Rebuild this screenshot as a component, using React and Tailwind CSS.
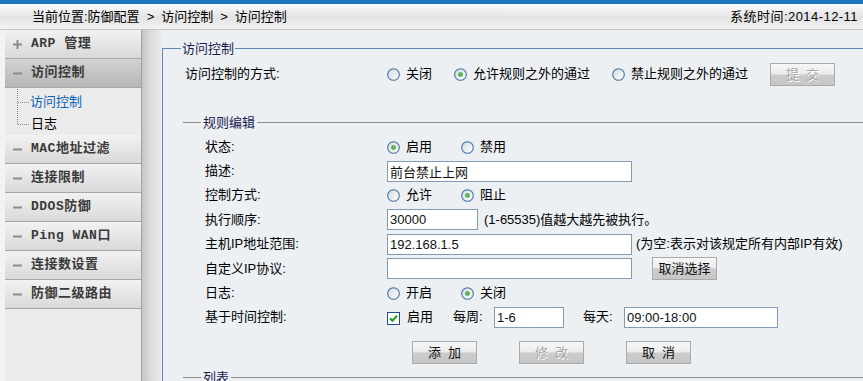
import React from 'react'

const MENU = [
  { id: 'arp', label: 'ARP 管理', icon: 'plus' },
  { id: 'acl', label: '访问控制', active: true, sub: ['访问控制', '日志'] },
  { id: 'mac', label: 'MAC地址过滤' },
  { id: 'conn', label: '连接限制' },
  { id: 'ddos', label: 'DDOS防御' },
  { id: 'ping', label: 'Ping WAN口' },
  { id: 'cnum', label: '连接数设置' },
  { id: 'route', label: '防御二级路由' },
]

function Radio({ checked }) {
  return (
    <svg width="13" height="13" viewBox="0 0 13 13" className="shrink-0">
      <defs>
        <linearGradient id="rfill" x1="0" y1="0" x2="1" y2="1">
          <stop offset="0" stopColor="#d3d8de" />
          <stop offset="1" stopColor="#ffffff" />
        </linearGradient>
      </defs>
      <circle cx="6.5" cy="6.5" r="5.8" fill="url(#rfill)" stroke="#45739f" strokeWidth="1.1" />
      {checked && <circle cx="6.5" cy="6.5" r="2.3" fill="#2ea32e" />}
      {checked && <circle cx="6.5" cy="6.5" r="1" fill="#8be08b" />}
    </svg>
  )
}

function Opt({ w, checked, children }) {
  return (
    <div className={`flex items-center gap-[6px] ${w}`}>
      <Radio checked={checked} />
      <span>{children}</span>
    </div>
  )
}

function Btn({ children, disabled }) {
  return (
    <button
      className={`h-[23px] w-[65px] shrink-0 border border-[#aaaaaa] bg-[linear-gradient(to_bottom,#f7f7f7_0%,#ebebeb_47%,#cbcbcb_53%,#c7c7c7_100%)] text-[13px] leading-none ${disabled ? 'text-[#a6a6a6] [text-shadow:1px_1px_0_#ffffff]' : 'text-[#111]'}`}
    >
      {children}
    </button>
  )
}

function Field({ w, value }) {
  return (
    <input
      readOnly
      value={value}
      className={`h-[21px] ${w} border border-[#7f9db9] bg-white pl-[2px] text-[13px] text-[#111] outline-none`}
    />
  )
}

function Row({ h, label, children }) {
  return (
    <div className={`flex items-center pl-[24px] ${h}`}>
      <span className="w-[182px] shrink-0">{label}</span>
      {children}
    </div>
  )
}

function Divider({ title, className }) {
  return (
    <div className={`ml-[2px] flex h-[17px] items-center ${className}`}>
      <div className="h-px w-[18px] bg-[#8a8a8a]" />
      <span className="px-[2px] leading-[17px] text-[#1a1a50]">{title}</span>
      <div className="h-px flex-1 bg-[#8a8a8a]" />
    </div>
  )
}

function MenuIcon({ type }) {
  if (type === 'plus') {
    return (
      <svg width="9" height="9" viewBox="0 0 9 9" className="shrink-0">
        <rect x="0" y="3.5" width="9" height="2" fill="#8c8c8c" />
        <rect x="3.5" y="0" width="2" height="9" fill="#8c8c8c" />
      </svg>
    )
  }
  return (
    <svg width="9" height="9" viewBox="0 0 9 9" className="shrink-0">
      <rect x="0" y="3.5" width="9" height="2" fill="#8c8c8c" />
    </svg>
  )
}

function Sidebar() {
  return (
    <aside className="flex w-[142px] shrink-0 bg-[#f3f3f3] pl-[5px]">
      <div className="w-[137px] border-r border-[#a3a3a3] bg-[#ebebeb] font-['Liberation_Mono','Noto_Sans_CJK_SC',monospace]">
        {MENU.map(m => (
          <div key={m.id}>
            <div
              className={`flex h-[29px] items-center border-b border-[#a6a6a6] pl-[8px] ${m.active ? 'bg-[linear-gradient(to_bottom,#d3d3d3,#b6b6b6)]' : 'bg-[linear-gradient(to_bottom,#f2f2f2,#d9d9d9)]'}`}
            >
              <MenuIcon type={m.icon} />
              <span className="ml-[9px] whitespace-pre text-[13px] font-bold tracking-[0.5px] text-[#3a3a3a]">{m.label}</span>
            </div>
            {m.sub && (
              <div className="flex h-[47px] bg-[#ebebeb] pl-[11px]">
                <svg width="14" height="47" viewBox="0 0 14 47" className="shrink-0">
                  <g stroke="#8a8a8a" strokeWidth="1" strokeDasharray="1 1" fill="none">
                    <line x1="1.5" y1="1" x2="1.5" y2="36" />
                    <line x1="2" y1="14.5" x2="14" y2="14.5" />
                    <line x1="2" y1="36.5" x2="14" y2="36.5" />
                  </g>
                </svg>
                <div className="flex flex-col pt-[3px] font-['Liberation_Sans','Noto_Sans_CJK_SC',sans-serif] text-[13px]">
                  <span className="flex h-[22px] items-center text-[#0b63b3]">{m.sub[0]}</span>
                  <span className="flex h-[22px] items-center pl-px text-black">{m.sub[1]}</span>
                </div>
              </div>
            )}
          </div>
        ))}
      </div>
    </aside>
  )
}

export default function App() {
  return (
    <div className="h-[381px] w-[863px] overflow-hidden bg-[#ecf0f3] font-['Liberation_Sans','Noto_Sans_CJK_SC',sans-serif] text-[13px] text-black">
      <div className="h-[4px] bg-[#1b76bc]" />
      <div className="flex h-[26px] items-center justify-between border-b border-[#c3c3c3] bg-[linear-gradient(to_bottom,#fbfbfb,#e3e3e3_55%,#f3f3f3)] pl-[32px] pr-[5px]">
        <span>
          当前位置:防御配置<span className="mx-[7px]">&gt;</span>访问控制<span className="mx-[7px]">&gt;</span>访问控制
        </span>
        <span className="tracking-[0.45px]">系统时间:2014-12-11</span>
      </div>

      <div className="flex h-[351px]">
        <Sidebar />
        <div className="w-[19px] shrink-0 bg-[linear-gradient(to_right,#c4c4c4,#d9d9d9_40%,#e9e9e9)]" />

        <main className="min-w-0 flex-1 pt-[10px]">
          <fieldset className="ml-[1px] min-w-0 border-l border-t border-[#5f89b6] pl-[18px]">
            <legend className="px-[1px] leading-[17px] text-[#1a1a50]">访问控制</legend>

            <div className="mt-[5px] flex h-[24px] items-center pl-[4px]">
              <span className="w-[202px] shrink-0">访问控制的方式:</span>
              <Opt w="w-[67px]">关闭</Opt>
              <Opt w="w-[158px]" checked>允许规则之外的通过</Opt>
              <Opt w="w-[158px]">禁止规则之外的通过</Opt>
              <Btn disabled>提&nbsp;&nbsp;交</Btn>
            </div>

            <Divider title="规则编辑" className="mt-[28px]" />

            <div className="mt-[4px]">
              <Row h="h-[24px]" label="状态:">
                <Opt w="w-[74px]" checked>启用</Opt>
                <Opt w="w-[74px]">禁用</Opt>
              </Row>
              <Row h="h-[24px]" label="描述:">
                <Field w="w-[245px]" value="前台禁止上网" />
              </Row>
              <Row h="h-[24px]" label="控制方式:">
                <Opt w="w-[74px]">允许</Opt>
                <Opt w="w-[74px]" checked>阻止</Opt>
              </Row>
              <Row h="h-[25px]" label="执行顺序:">
                <Field w="w-[91px]" value="30000" />
                <span className="ml-[6px]">(1-65535)值越大越先被执行。</span>
              </Row>
              <Row h="h-[24px]" label="主机IP地址范围:">
                <Field w="w-[245px]" value="192.168.1.5" />
                <span className="ml-[4px]">(为空:表示对该规定所有内部IP有效)</span>
              </Row>
              <Row h="h-[25px]" label="自定义IP协议:">
                <Field w="w-[245px]" value="" />
                <div className="ml-[20px]">
                  <Btn>取消选择</Btn>
                </div>
              </Row>
              <Row h="h-[24px]" label="日志:">
                <Opt w="w-[74px]">开启</Opt>
                <Opt w="w-[74px]" checked>关闭</Opt>
              </Row>
              <Row h="h-[24px]" label="基于时间控制:">
                <svg width="13" height="13" viewBox="0 0 13 13" className="mt-[3px] shrink-0">
                  <rect x="0.5" y="0.5" width="12" height="12" fill="#ffffff" stroke="#1d5283" />
                  <path d="M3 6.3 L5.4 8.8 L10 3.8" fill="none" stroke="#22a022" strokeWidth="2" />
                </svg>
                <span className="ml-[7px] w-[46px] shrink-0">启用</span>
                <span className="w-[41px] shrink-0">每周:</span>
                <Field w="w-[70px]" value="1-6" />
                <span className="ml-[19px] w-[41px] shrink-0">每天:</span>
                <Field w="w-[154px]" value="09:00-18:00" />
              </Row>
            </div>

            <div className="mt-[12px] flex gap-[42px] pl-[231px]">
              <Btn>添&nbsp;&nbsp;加</Btn>
              <Btn disabled>修&nbsp;&nbsp;改</Btn>
              <Btn>取&nbsp;&nbsp;消</Btn>
            </div>

            <Divider title="列表" className="mt-[5px]" />
          </fieldset>
        </main>
      </div>
    </div>
  )
}
